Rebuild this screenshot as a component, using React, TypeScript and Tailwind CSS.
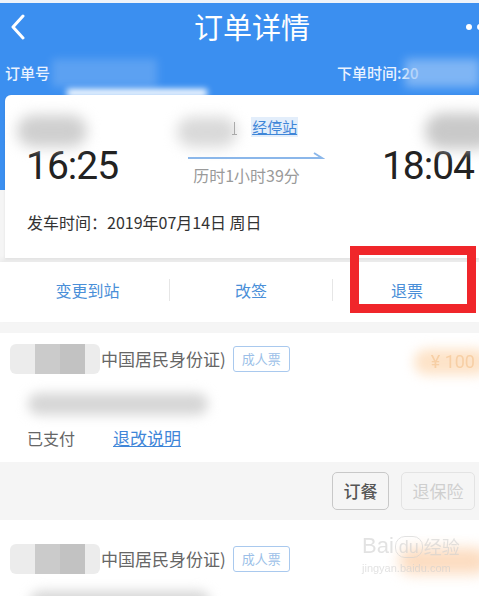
import React from "react";

const cjk = { fontFamily: '"Noto Sans CJK SC", "Noto Sans", sans-serif' };

function Blob({ className }: { className: string }) {
  return <div className={`absolute rounded-full blur-[7px] ${className}`} />;
}

function PassengerRow() {
  return (
    <div className="flex items-center h-[28px]">
      <div className="ml-[10px] w-[90px] h-[30px] rounded-[6px] bg-[#ececec] flex">
        <div className="ml-[25px] w-[25px] h-full bg-[#cbcbcb]" />
        <div className="w-[25px] h-full bg-[#c2c2c2]" />
      </div>
      <span className="ml-[1px] text-[17px] text-[#666]">中国居民身份证)</span>
      <span className="ml-[7px] h-[26px] px-[8px] flex items-center border border-[#a9c9ee] rounded-[3px] text-[13px] text-[#9cbfe8]">
        成人票
      </span>
    </div>
  );
}

export default function App() {
  return (
    <div className="w-[479px] h-[596px] overflow-hidden bg-[#f5f5f5] relative" style={cjk}>
      <div className="h-[3px] bg-[#eef3fa]" />
      {/* blue header */}
      <div className="bg-[#3b8ff0] h-[187px]">
        <div className="h-[48px] flex items-center relative">
          <svg className="ml-[9px]" width="18" height="26" viewBox="0 0 18 26">
            <path d="M14 2 L4 13 L14 24" stroke="white" strokeWidth="3" fill="none" strokeLinecap="round" strokeLinejoin="round" />
          </svg>
          <div className="absolute left-[194px] top-[5px] text-[29px] leading-[36px] text-white">订单详情</div>
          <div className="ml-auto mr-[-4px] flex gap-[5px]">
            <div className="w-[6px] h-[6px] rounded-full bg-white" />
            <div className="w-[6px] h-[6px] rounded-full bg-white" />
          </div>
        </div>
        <div className="h-[44px] flex items-center text-[15px] text-[#eaf2ff] font-medium relative">
          <span className="ml-[5px]">订单号</span>
          <div className="ml-[2px] w-[105px] h-[28px] bg-[#8fbdf5] opacity-40 blur-[4px]" />
          <span className="absolute left-[337px]">下单时间:20</span>
          <div className="absolute left-[405px] w-[75px] h-[28px] bg-[#9cc6f7] opacity-70 blur-[5px]" />
        </div>
      </div>

      {/* train card */}
      <div className="-mt-[95px] ml-[5px] bg-white rounded-tl-[6px] h-[163px] relative shadow-[0_1px_3px_rgba(0,0,0,0.08)]">
        <Blob className="left-[12px] top-[20px] w-[70px] h-[32px] bg-[#cfcfcf]" />
        <Blob className="left-[172px] top-[22px] w-[60px] h-[30px] bg-[#d9d9d9]" />
        <Blob className="left-[420px] top-[18px] w-[70px] h-[36px] bg-[#c9c9c9]" />
        <div className="absolute left-[62px] top-[-6px] w-[140px] h-[8px] bg-white blur-[3px]" />

        <div className="flex items-start pt-[47px]">
          <div
            className="ml-[21px] text-[39px] leading-[48px] text-[#222] tracking-[-1px]"
            style={{ fontFamily: "Roboto, sans-serif" }}
          >
            16:25
          </div>
          <div className="ml-[70px] w-[137px] relative">
            <div className="absolute left-[43px] top-[-20px] w-[6px] h-[13px] flex flex-col items-center">
              <div className="w-[1px] h-full bg-[#aaa]" />
              <div className="w-[5px] h-[1px] bg-[#aaa]" />
            </div>
            <div className="absolute left-[63px] top-[-25px] text-[15px] leading-[20px] text-[#3f86d8] underline bg-[#e3eefb] px-[1px]">
              经停站
            </div>
            <svg width="137" height="8" viewBox="0 0 137 8" className="mt-[10px]">
              <path d="M0 6 L134 6 L126 1" stroke="#8bb7ea" strokeWidth="2" fill="none" />
            </svg>
            <div className="ml-[5px] mt-[4px] text-[16px] leading-[22px] text-[#9a9a9a]">历时1小时39分</div>
          </div>
          <div
            className="ml-auto mr-[5px] text-[39px] leading-[48px] text-[#222] tracking-[-1px]"
            style={{ fontFamily: "Roboto, sans-serif" }}
          >
            18:04
          </div>
        </div>
        <div className="ml-[22px] mt-[21px] text-[16px] leading-[22px] text-[#333]">发车时间：2019年07月14日 周日</div>
      </div>

      {/* actions */}
      <div className="mt-[4px] h-[60px] bg-white flex items-center pb-[5px] text-[16px] text-[#4a8fd8] shadow-[0_-3px_5px_rgba(0,0,0,0.05)]">
        <div className="w-[169px] text-center pl-[6px]">变更到站</div>
        <div className="w-[1px] h-[22px] bg-[#e6e6e6]" />
        <div className="w-[162px] text-center">改签</div>
        <div className="w-[1px] h-[22px] bg-[#e6e6e6]" />
        <div className="flex-1 text-center pl-[2px]">退票</div>
      </div>

      {/* passenger 1 */}
      <div className="mt-[11px] bg-white h-[129px] relative pt-[12px]">
        <PassengerRow />
        <div className="absolute right-[-10px] top-[16px] w-[75px] h-[26px] bg-[#fde3c8] blur-[6px] rounded-full" />
        <div className="absolute right-[4px] top-[15px] text-[18px] text-[#f7cfa5] blur-[0.6px]" style={{ fontFamily: "Roboto, sans-serif" }}>
          ¥ 100
        </div>
        <div className="ml-[28px] mt-[20px] w-[180px] h-[22px] rounded-full bg-[#d6d6d6] blur-[6px]" />
        <div className="ml-[27px] mt-[12px] flex items-center text-[16px] leading-[22px]">
          <span className="text-[#666]">已支付</span>
          <span className="ml-[38px] text-[17px] text-[#3f86d8] underline">退改说明</span>
        </div>
      </div>

      {/* button bar */}
      <div className="h-[58px] flex items-center justify-end pr-[4px] gap-[12px]">
        <div className="w-[57px] h-[38px] border border-[#c8c8c8] rounded-[5px] flex items-center justify-center text-[17px] text-[#555] font-medium">
          订餐
        </div>
        <div className="w-[74px] h-[38px] border border-[#e3e3e3] rounded-[5px] flex items-center justify-center text-[17px] text-[#cfcfcf]">
          退保险
        </div>
      </div>

      {/* passenger 2 */}
      <div className="bg-white h-[80px] relative pt-[25px]">
        <PassengerRow />
        <div className="absolute right-[-10px] top-[28px] w-[90px] h-[26px] bg-[#fcdcc0] blur-[7px] rounded-full" />
        <div className="ml-[30px] mt-[18px] w-[180px] h-[22px] rounded-full bg-[#d6d6d6] blur-[6px]" />
        {/* watermark */}
        <div className="absolute left-[362px] top-[14px] flex flex-col items-start opacity-60">
          <div className="flex items-end text-[#d0d0d0] text-[22px] leading-[24px]" style={{ fontFamily: "Arial, sans-serif" }}>
            <span>Bai</span>
            <span className="px-[3px] border border-[#d0d0d0] rounded-[10px] text-[18px] leading-[20px] mx-[1px]">du</span>
            <span className="text-[18px]" style={cjk}>经验</span>
          </div>
          <div className="text-[11px] text-[#cfcfcf] mt-[2px]" style={{ fontFamily: "Arial, sans-serif" }}>jingyan.baidu.com</div>
        </div>
      </div>

      {/* red annotation */}
      <div className="absolute left-[350px] top-[246px] w-[126px] h-[67px] border-[9px] border-[#f0262a]" />
    </div>
  );
}
